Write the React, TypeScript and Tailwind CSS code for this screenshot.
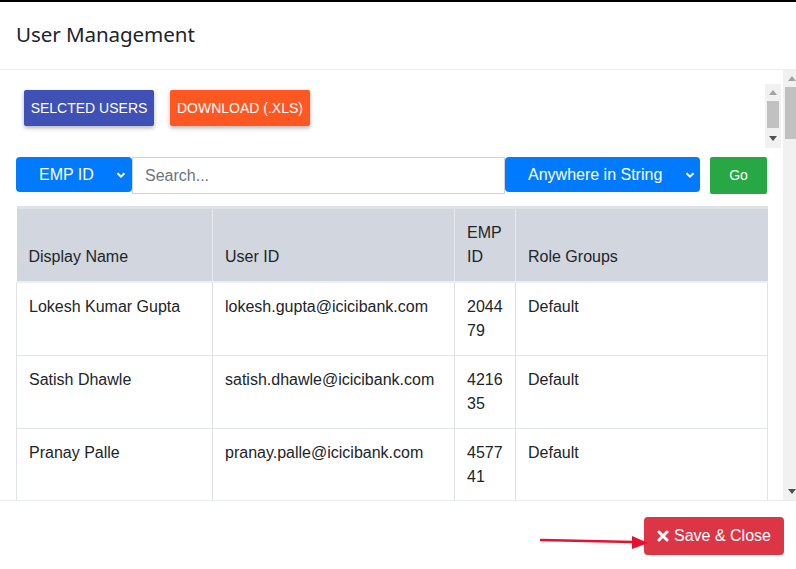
import React from "react";

const users = [
  { name: "Lokesh Kumar Gupta", id: "lokesh.gupta@icicibank.com", emp: ["2044", "79"], role: "Default" },
  { name: "Satish Dhawle", id: "satish.dhawle@icicibank.com", emp: ["4216", "35"], role: "Default" },
  { name: "Pranay Palle", id: "pranay.palle@icicibank.com", emp: ["4577", "41"], role: "Default" },
];

function Chevron() {
  return (
    <svg width="10" height="10" viewBox="0 0 10 10" className="shrink-0">
      <path d="M1.5 3.2 L5 6.7 L8.5 3.2" fill="none" stroke="white" strokeWidth="2" />
    </svg>
  );
}

function Arrow({ dir }: { dir: "up" | "down" }) {
  return (
    <svg width="8" height="5" viewBox="0 0 8 5">
      {dir === "up" ? <path d="M0 5 L4 0 L8 5Z" fill="#a3a3a3" /> : <path d="M0 0 L4 5 L8 0Z" fill="#505050" />}
    </svg>
  );
}

export default function App() {
  return (
    <div
      className="relative w-[796px] h-[569px] overflow-hidden bg-white border-t-2 border-black text-[#212529]"
      style={{ fontFamily: '"Liberation Sans", Arial, sans-serif' }}
    >
      {/* header */}
      <div className="h-[68px] border-b border-[#eeeeee] flex items-center px-4">
        <h1 className="text-[20.6px] tracking-[-0.1px] pb-[2px]" style={{ fontFamily: '"Noto Sans", sans-serif' }}>
          User Management
        </h1>
      </div>

      {/* body */}
      <div className="h-[430px] flex">
        <div className="flex-1 overflow-hidden px-4 pt-[14px]">
          <div className="-mr-[14px] h-[64px] flex">
            <div className="flex-1 flex gap-4 pl-2 pt-[6px] items-start">
              <button className="h-9 w-[130px] bg-[#3f51b5] text-white text-[14px] rounded-[2px] shadow-[0_2px_4px_rgba(0,0,0,0.3)]">
                SELCTED USERS
              </button>
              <button className="h-9 w-[140px] bg-[#ff5722] text-white text-[14px] rounded-[2px] shadow-[0_2px_4px_rgba(0,0,0,0.3)]">
                DOWNLOAD (.XLS)
              </button>
            </div>
            <div className="w-4 bg-[#f1f1f1] flex flex-col items-center">
              <div className="h-[17px] flex items-center">
                <Arrow dir="up" />
              </div>
              <div className="w-3 h-[27px] bg-[#c1c1c1]" />
              <div className="flex-1 flex items-center">
                <Arrow dir="down" />
              </div>
            </div>
          </div>

          {/* filter row */}
          <div className="mt-[9px] flex items-start">
            <div className="w-[116px] h-[35px] bg-[#007bff] text-white rounded-[4px] flex items-center pl-[23px] pr-[6px]">
              <span className="flex-1 text-[16px]">EMP ID</span>
              <Chevron />
            </div>
            <div className="w-[373px] h-[37px] border border-[#ced4da] flex items-center px-3 text-[16px] text-[#6c757d]">
              Search...
            </div>
            <div className="w-[195px] h-[35px] bg-[#007bff] text-white rounded-[4px] flex items-center pl-[23px] pr-[5px]">
              <span className="flex-1 text-[16px]">Anywhere in String</span>
              <Chevron />
            </div>
            <button className="ml-[10px] w-[57px] h-[37px] bg-[#28a745] text-white text-[14px] rounded-[2px]">Go</button>
          </div>

          {/* table */}
          <table className="mt-[12px] w-[751px] table-fixed border-collapse border-t-[3px] border-[#dee2e6] text-[16px] leading-6">
            <colgroup>
              <col className="w-[196px]" />
              <col className="w-[242px]" />
              <col className="w-[61px]" />
              <col className="w-[252px]" />
            </colgroup>
            <thead>
              <tr className="bg-[#d2d6de] border-b-2 border-[#eceef2]">
                <th className="font-normal text-left align-bottom p-3 border-r border-[#e6e8ed]">Display Name</th>
                <th className="font-normal text-left align-bottom p-3 border-r border-[#e6e8ed]">User ID</th>
                <th className="font-normal text-left align-bottom p-3 border-r border-[#e6e8ed]">
                  EMP
                  <br />
                  ID
                </th>
                <th className="font-normal text-left align-bottom p-3">Role Groups</th>
              </tr>
            </thead>
            <tbody>
              {users.map((u) => (
                <tr key={u.id}>
                  <td className="align-top p-3 border border-[#dee2e6] h-[73px]">{u.name}</td>
                  <td className="align-top p-3 border border-[#dee2e6]">{u.id}</td>
                  <td className="align-top p-3 border border-[#dee2e6]">
                    {u.emp[0]}
                    <br />
                    {u.emp[1]}
                  </td>
                  <td className="align-top p-3 border border-[#dee2e6]">{u.role}</td>
                </tr>
              ))}
            </tbody>
          </table>
        </div>

        {/* page scrollbar */}
        <div className="w-[13px] bg-[#f1f1f1] flex flex-col items-end">
          <div className="h-[17px] w-full flex items-center justify-center pl-1">
            <Arrow dir="up" />
          </div>
          <div className="w-[11px] h-[52px] bg-[#c1c1c1]" />
          <div className="flex-1" />
          <div className="h-[17px] w-full flex items-center justify-center pl-1">
            <Arrow dir="down" />
          </div>
        </div>
      </div>

      {/* footer */}
      <div className="h-[69px] border-t border-[#e9ecef] flex justify-end items-start pt-4 pr-3">
        <button className="h-[38px] w-[140px] bg-[#dc3545] text-white text-[16px] rounded-[4px] flex items-center justify-center gap-[5px]">
          <svg width="12" height="12" viewBox="0 0 12 12">
            <path d="M2 2 L10 10 M10 2 L2 10" stroke="white" strokeWidth="3" strokeLinecap="round" />
          </svg>
          Save &amp; Close
        </button>
      </div>

      {/* annotation arrow */}
      <svg className="absolute left-[538px] top-[526px]" width="112" height="24" viewBox="0 0 112 24">
        <line x1="3" y1="12" x2="96" y2="14" stroke="#e8102e" strokeWidth="2.5" strokeLinecap="round" />
        <path d="M110 15 L94 8 L94 21 Z" fill="#e8102e" />
      </svg>
    </div>
  );
}
